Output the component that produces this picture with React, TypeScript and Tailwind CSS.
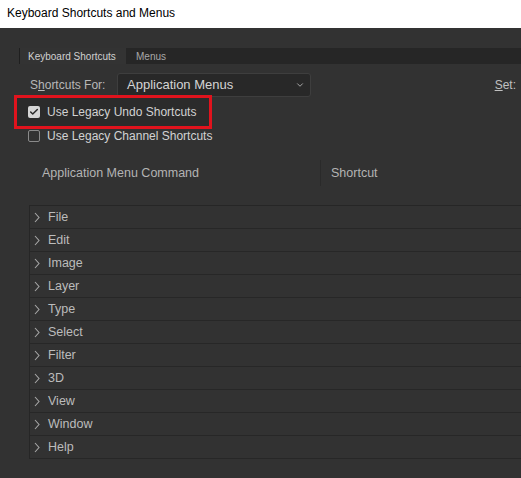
import { ChevronDown, Check } from 'lucide-react';

const menus = ['File', 'Edit', 'Image', 'Layer', 'Type', 'Select', 'Filter', '3D', 'View', 'Window', 'Help'];

function Caret() {
  return (
    <svg width="6" height="11" viewBox="0 0 6 11" className="ml-[4px] text-[#a8a8a8]">
      <polyline points="1,1 5,5.5 1,10" fill="none" stroke="currentColor" strokeWidth="1.1" />
    </svg>
  );
}

export default function App() {
  return (
    <div className="w-[521px] h-[478px] overflow-hidden bg-[#323232] text-[12px] text-[#c6c6c6] font-['Liberation_Sans',sans-serif] flex flex-col">
      {/* window title */}
      <div className="h-[28px] bg-white text-black flex items-center pl-[7px] pb-[2px] shrink-0">
        Keyboard Shortcuts and Menus
      </div>

      {/* tabs */}
      <div className="mt-[20px] ml-[19px] h-[16px] bg-[#262626] border-l border-[#1f1f1f] flex items-stretch text-[10px] shrink-0">
        <div className="w-[106px] bg-[#333333] text-[#d0d0d0] flex items-center pl-[8px]">Keyboard Shortcuts</div>
        <div className="flex items-center pl-[10px] text-[#a8a8a8]">Menus</div>
      </div>

      {/* shortcuts for */}
      <div className="h-[24px] mt-[9px] flex items-center shrink-0">
        <span className="ml-[30px] w-[87px] text-[#b8b8b8]">
          S<span className="underline">h</span>ortcuts For:
        </span>
        <div className="w-[194px] h-[24px] rounded-[3px] bg-[#282828] border border-[#3e3e3e] flex items-center justify-between pl-[9px] pr-[5px] text-[13px] text-[#d4d4d4]">
          Application Menus
          <ChevronDown size={10} strokeWidth={2} className="text-[#bdbdbd]" />
        </div>
        <span className="ml-auto mr-[5px] text-[12px] text-[#c0c0c0] whitespace-nowrap">
          <span className="underline">S</span>et:
        </span>
      </div>

      {/* checkboxes */}
      <div className="ml-[14px] mt-[-2px] w-[198px] h-[34px] border-[3px] border-[#e0131d] bg-[#2b2b2b] flex items-center pl-[11px] gap-[7px] shrink-0 text-[12px] text-[#d2d2d2]">
        <div className="w-[12px] h-[12px] rounded-[2px] bg-[#d6d6d6] flex items-center justify-center">
          <Check size={10} strokeWidth={3.5} className="text-[#2a2a2a]" />
        </div>
        Use Legacy Undo Shortcuts
      </div>
      <div className="ml-[28px] mt-[-1px] h-[16px] flex items-center gap-[7px] shrink-0 text-[12px] text-[#d2d2d2]">
        <div className="w-[12px] h-[12px] rounded-[2px] border border-[#8a8a8a]" />
        Use Legacy Channel Shortcuts
      </div>

      {/* table header */}
      <div className="ml-[29px] mt-[16px] h-[26px] flex items-center shrink-0 text-[12.5px] text-[#b4b4b4]">
        <div className="w-[291px] pl-[13px]">Application Menu Command</div>
        <div className="h-[26px] border-l border-[#2a2a2a] pl-[10px] flex items-center">Shortcut</div>
      </div>

      {/* command list */}
      <div className="ml-[29px] mt-[19px] border-l border-t border-[#262626] shrink-0">
        {menus.map((m) => (
          <div key={m} className="h-[23px] flex items-center border-b border-[#272727] text-[12.5px] text-[#bcbcbc]">
            <Caret />
            <span className="ml-[8px]">{m}</span>
          </div>
        ))}
      </div>
    </div>
  );
}
